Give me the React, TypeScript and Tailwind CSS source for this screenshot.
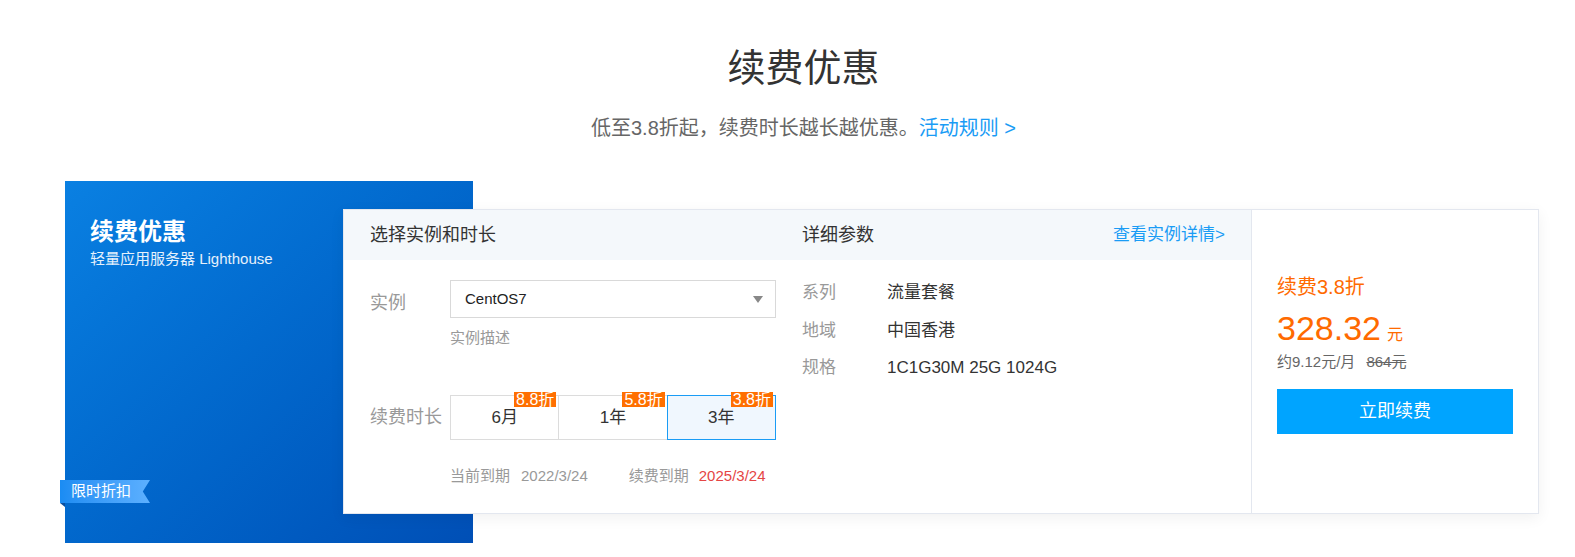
import React from "react";

const durations = [
  { label: "6月", off: "8.8折", active: false },
  { label: "1年", off: "5.8折", active: false },
  { label: "3年", off: "3.8折", active: true },
];

const params = [
  { k: "系列", v: "流量套餐" },
  { k: "地域", v: "中国香港" },
  { k: "规格", v: "1C1G30M 25G 1024G" },
];

export default function App() {
  return (
    <div className="min-h-[557px] bg-white font-['Liberation_Sans','Noto_Sans_CJK_SC',sans-serif] text-[#333]">
      {/* heading */}
      <div className="flex flex-col items-center pl-[32px] pt-[44px]">
        <h1 className="text-[38px] leading-[48px] text-[#333]">续费优惠</h1>
        <p className="mt-[22px] text-[20px] leading-[28px] text-[#666]">
          低至3.8折起，续费时长越长越优惠。
          <a className="text-[#1a9cf5]">活动规则 &gt;</a>
        </p>
      </div>

      <div className="mt-[39px] flex pl-[65px]">
        {/* blue panel */}
        <div className="relative h-[362px] w-[408px] shrink-0 bg-gradient-to-br from-[#0a80e2] to-[#004fb6] pl-[25px] pt-[35px] text-white">
          <div className="text-[24px] font-bold leading-[32px]">续费优惠</div>
          <div className="mt-[1px] text-[15px] leading-[20px] text-white/90">轻量应用服务器 Lighthouse</div>

          <div className="absolute left-[-5px] top-[299px]">
            <div className="flex h-[23px] w-[90px] items-center bg-gradient-to-r from-[#1a8cf3] to-[#5cb0ff] pl-[11px] text-[15px] text-white shadow-[-2px_2px_6px_rgba(0,40,120,0.25)] [clip-path:polygon(0_0,100%_0,92%_50%,100%_100%,0_100%)]">
              限时折扣
            </div>
            <div className="h-0 w-0 border-l-[5px] border-t-[4px] border-l-transparent border-t-[#0b4f9e]" />
          </div>
        </div>

        {/* card */}
        <div className="relative z-10 ml-[-130px] mt-[28px] flex h-[305px] w-[1196px] border border-[#e3e7ef] bg-white shadow-[0_4px_14px_rgba(0,0,0,0.06)]">
          <div className="flex w-[907px] flex-col">
            <div className="flex h-[50px] items-center bg-[#f4f8fb] px-[26px]">
              <div className="w-[432px] text-[18px]">选择实例和时长</div>
              <div className="flex flex-1 items-center justify-between">
                <span className="text-[18px]">详细参数</span>
                <a className="text-[17px] text-[#1a9cf5]">查看实例详情&gt;</a>
              </div>
            </div>

            <div className="flex px-[26px] pt-[20px]">
              {/* left form */}
              <div className="w-[406px]">
                <div className="flex">
                  <div className="w-[80px] pt-[10px] text-[18px] leading-[26px] text-[#999]">实例</div>
                  <div className="flex-1">
                    <div className="flex h-[38px] items-center justify-between border border-[#d9d9d9] pl-[14px] pr-[12px] text-[15px] text-[#222]">
                      <span>CentOS7</span>
                      <span className="h-0 w-0 border-x-[5px] border-t-[7px] border-x-transparent border-t-[#888]" />
                    </div>
                    <div className="mt-[10px] text-[15px] leading-[20px] text-[#999]">实例描述</div>
                  </div>
                </div>

                <div className="mt-[47px] flex">
                  <div className="w-[80px] pt-[9px] text-[18px] leading-[26px] text-[#999]">续费时长</div>
                  <div className="flex flex-1">
                    {durations.map((d, i) => (
                      <div
                        key={d.label}
                        className={`relative flex h-[45px] flex-1 items-center justify-center border text-[17px] ${
                          i > 0 ? "-ml-px" : ""
                        } ${d.active ? "z-10 border-[#1a9cf5] bg-[#f0f7fe]" : "border-[#dcdcdc] bg-white"}`}
                      >
                        {d.label}
                        <span className="absolute right-[2px] top-[-4px] h-[15px] overflow-hidden bg-[#ff6f00] px-[2px] text-[16px] leading-[15px] text-white">
                          {d.off}
                        </span>
                      </div>
                    ))}
                  </div>
                </div>

                <div className="mt-[26px] flex pl-[80px] text-[15px] leading-[20px] text-[#999]">
                  <span>当前到期</span>
                  <span className="ml-[11px]">2022/3/24</span>
                  <span className="ml-[41px]">续费到期</span>
                  <span className="ml-[10px] text-[#e54545]">2025/3/24</span>
                </div>
              </div>

              {/* params */}
              <div className="ml-[26px] mt-[-6px] flex-1">
                {params.map((p) => (
                  <div key={p.k} className="flex h-[37.5px] items-center text-[17px]">
                    <span className="w-[85px] text-[#999]">{p.k}</span>
                    <span className="text-[#333]">{p.v}</span>
                  </div>
                ))}
              </div>
            </div>
          </div>

          {/* price */}
          <div className="flex-1 border-l border-[#e3e7ef] px-[25px] pt-[63px]">
            <div className="text-[20px] leading-[28px] text-[#ff6a00]">续费3.8折</div>
            <div className="mt-[7px] flex items-baseline text-[#ff6a00]">
              <span className="text-[34px] leading-[40px]">328.32</span>
              <span className="ml-[6px] text-[16px]">元</span>
            </div>
            <div className="mt-[4px] flex text-[15px] leading-[20px] text-[#666]">
              <span>约9.12元/月</span>
              <span className="ml-[11px] line-through">864元</span>
            </div>
            <button className="mt-[17px] h-[45px] w-full bg-[#00a4ff] text-[18px] text-white">立即续费</button>
          </div>
        </div>
      </div>
    </div>
  );
}
